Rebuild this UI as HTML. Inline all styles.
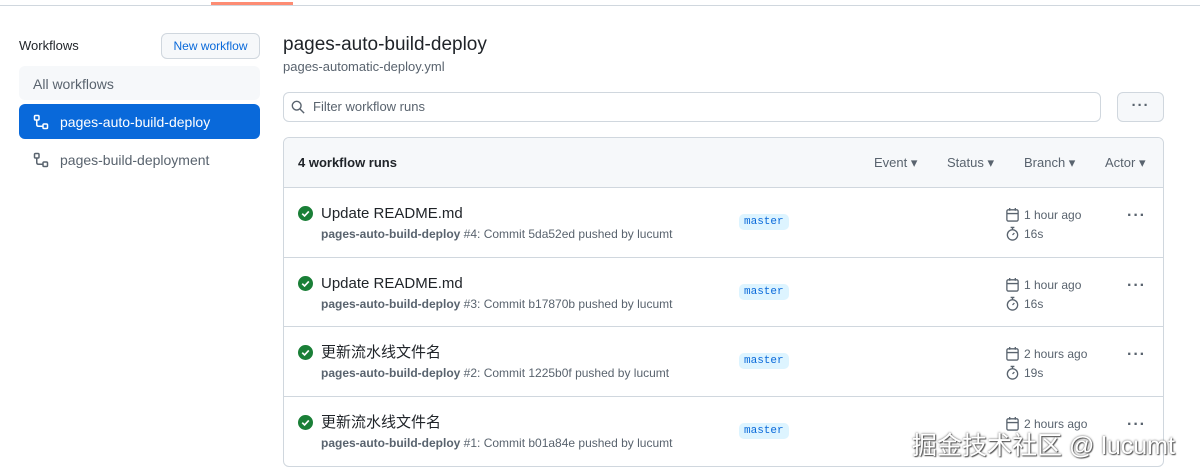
<!DOCTYPE html><html><head><style>
body{margin:0;width:1200px;height:473px;background:#fff;font-family:"Liberation Sans","Noto Sans CJK SC",sans-serif;color:#1f2328;position:relative;overflow:hidden}
.a{position:absolute}
.ic{position:absolute}
.row{position:absolute;left:283px;width:880px;height:69px;border-top:1px solid #d0d7de}
.t{position:absolute;left:38px;top:16px;font-size:15px;line-height:20px;height:20px}
.s{position:absolute;left:38px;top:39px;font-size:12px;line-height:15px;color:#59636e}
.s b{font-weight:600}
.ok{position:absolute;left:15px;top:18px;width:15px;height:15px}
.br{position:absolute;left:456px;top:26px;background:#ddf4ff;color:#0969da;font-family:"Liberation Mono",monospace;font-size:11px;padding:2px 5px;border-radius:5px}
.d1{position:absolute;left:722px;top:19px;font-size:12px;color:#59636e;line-height:15px}
.d2{position:absolute;left:722px;top:38px;font-size:12px;color:#59636e;line-height:15px}
.d1 svg,.d2 svg{vertical-align:-3px;margin-right:4px}
.dots{position:absolute;left:844px;top:19px;font-size:16px;color:#59636e;letter-spacing:1px;font-weight:bold}
.f{position:absolute;font-size:13px;color:#59636e}
</style></head><body>
<svg width="0" height="0" style="position:absolute"><defs>
<symbol id="ok" viewBox="0 0 16 16"><circle cx="8" cy="8" r="8" fill="#1a7f37"/><path d="M4.5 8.2 7 10.6l4.5-4.8" fill="none" stroke="#fff" stroke-width="1.8"/></symbol>
<symbol id="cal" viewBox="0 0 16 16"><g fill="none" stroke="#59636e" stroke-width="1.4"><rect x="2" y="3" width="12" height="12" rx="1.5"/><path d="M2 7h12M5 1v3M11 1v3"/></g></symbol>
<symbol id="tm" viewBox="0 0 16 16"><g fill="none" stroke="#59636e" stroke-width="1.4"><circle cx="8" cy="9.5" r="5.5"/><path d="M6 1.5h4M8 1.5v2.5M8 9.5l2-2"/></g></symbol>
</defs></svg>
<div class="a" style="left:0;top:5px;width:1200px;height:1px;background:#d0d7de"></div>
<div class="a" style="left:211px;top:2px;width:82px;height:3px;background:#fd8c73"></div>
<div class="a" style="left:19px;top:38px;font-size:13px">Workflows</div>
<div class="a" style="left:161px;top:33px;width:97px;height:24px;border:1px solid #d0d7de;border-radius:6px;background:#f6f8fa;color:#0969da;font-size:12px;text-align:center;line-height:24px">New workflow</div>
<div class="a" style="left:19px;top:66px;width:241px;height:34px;background:#f6f8fa;border-radius:6px"></div>
<div class="a" style="left:33px;top:76px;font-size:14px;color:#59636e">All workflows</div>
<div class="a" style="left:19px;top:104px;width:241px;height:35px;background:#0969da;border-radius:6px"></div>
<svg class="ic" style="left:33px;top:114px" width="16" height="16" viewBox="0 0 16 16" fill="none" stroke="#fff" stroke-width="1.5"><rect x="1.5" y="1.5" width="4.5" height="4.5" rx="1"/><rect x="10" y="10" width="4.5" height="4.5" rx="1"/><path d="M3.75 6v4.5c0 1 .5 1.75 1.75 1.75H10"/></svg>
<div class="a" style="left:60px;top:114px;font-size:14px;color:#fff">pages-auto-build-deploy</div>
<svg class="ic" style="left:33px;top:152px" width="16" height="16" viewBox="0 0 16 16" fill="none" stroke="#59636e" stroke-width="1.5"><rect x="1.5" y="1.5" width="4.5" height="4.5" rx="1"/><rect x="10" y="10" width="4.5" height="4.5" rx="1"/><path d="M3.75 6v4.5c0 1 .5 1.75 1.75 1.75H10"/></svg>
<div class="a" style="left:60px;top:152px;font-size:14px;color:#59636e">pages-build-deployment</div>

<div class="a" style="left:283px;top:34px;font-size:19px">pages-auto-build-deploy</div>
<div class="a" style="left:283px;top:59px;font-size:13px;color:#59636e">pages-automatic-deploy.yml</div>
<div class="a" style="left:283px;top:92px;width:816px;height:28px;border:1px solid #d0d7de;border-radius:6px"></div>
<svg class="ic" style="left:291px;top:100px" width="14" height="14" viewBox="0 0 16 16" fill="none" stroke="#59636e" stroke-width="1.6"><circle cx="6.5" cy="6.5" r="5"/><path d="M10.3 10.3 15 15"/></svg>
<div class="a" style="left:313px;top:99px;font-size:13px;color:#59636e">Filter workflow runs</div>
<div class="a" style="left:1117px;top:92px;width:45px;height:28px;border:1px solid #d0d7de;border-radius:6px;background:#f6f8fa"></div>
<div class="a" style="left:1117px;top:97px;width:47px;text-align:center;font-weight:bold;color:#59636e;letter-spacing:1px;font-size:15px">···</div>

<div class="a" style="left:283px;top:137px;width:879px;height:328px;border:1px solid #d0d7de;border-radius:6px;overflow:hidden">
<div style="height:50px;background:#f6f8fa"></div></div>
<div class="a" style="left:298px;top:155px;font-size:13px;font-weight:600">4 workflow runs</div>
<div class="f" style="left:874px;top:155px">Event ▾</div>
<div class="f" style="left:947px;top:155px">Status ▾</div>
<div class="f" style="left:1024px;top:155px">Branch ▾</div>
<div class="f" style="left:1105px;top:155px">Actor ▾</div>

<div class="row" style="top:187px"><svg class="ok"><use href="#ok"/></svg><div class="t">Update README.md</div><div class="s"><b>pages-auto-build-deploy</b> #4: Commit 5da52ed pushed by lucumt</div><div class="br">master</div><div class="d1"><svg width="15" height="15"><use href="#cal"/></svg>1 hour ago</div><div class="d2"><svg width="15" height="15"><use href="#tm"/></svg>16s</div><div class="dots">···</div></div>
<div class="row" style="top:257px"><svg class="ok"><use href="#ok"/></svg><div class="t">Update README.md</div><div class="s"><b>pages-auto-build-deploy</b> #3: Commit b17870b pushed by lucumt</div><div class="br">master</div><div class="d1"><svg width="15" height="15"><use href="#cal"/></svg>1 hour ago</div><div class="d2"><svg width="15" height="15"><use href="#tm"/></svg>16s</div><div class="dots">···</div></div>
<div class="row" style="top:326px"><svg class="ok"><use href="#ok"/></svg><div class="t">更新流水线文件名</div><div class="s"><b>pages-auto-build-deploy</b> #2: Commit 1225b0f pushed by lucumt</div><div class="br">master</div><div class="d1"><svg width="15" height="15"><use href="#cal"/></svg>2 hours ago</div><div class="d2"><svg width="15" height="15"><use href="#tm"/></svg>19s</div><div class="dots">···</div></div>
<div class="row" style="top:396px"><svg class="ok"><use href="#ok"/></svg><div class="t">更新流水线文件名</div><div class="s"><b>pages-auto-build-deploy</b> #1: Commit b01a84e pushed by lucumt</div><div class="br">master</div><div class="d1"><svg width="15" height="15"><use href="#cal"/></svg>2 hours ago</div><div class="dots">···</div></div>
<div class="a" style="left:912px;top:426px;font-size:25px;color:#fff;text-shadow:0 0 2px #555,1px 1px 1px #555">掘金技术社区 @ lucumt</div>
</body></html>
